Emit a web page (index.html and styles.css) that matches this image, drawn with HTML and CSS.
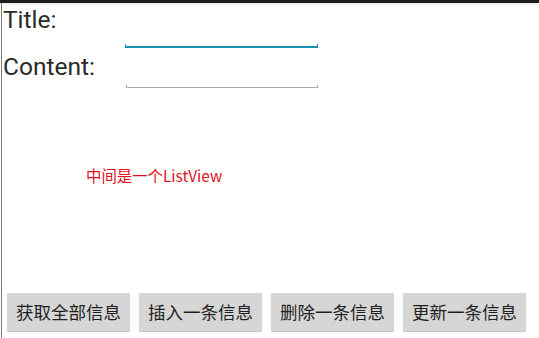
FILE: index.html
```html
<!DOCTYPE html>
<html>
<head>
<meta charset="utf-8">
<link rel="stylesheet" href="styles.css">
</head>
<body>
<div class="topbar"></div>
<div class="screen">
  <div class="row row-title">
    <span class="label">Title:</span>
    <div class="field field-active"></div>
  </div>
  <div class="row row-content">
    <span class="label">Content:</span>
    <div class="field"></div>
  </div>
  <div class="list">
    <span class="hint">中间是一个ListView</span>
  </div>
  <div class="buttons">
    <button class="btn">获取全部信息</button>
    <button class="btn">插入一条信息</button>
    <button class="btn">删除一条信息</button>
    <button class="btn">更新一条信息</button>
  </div>
</div>
</body>
</html>
```
FILE: styles.css
```css
html, body {
  margin: 0;
  padding: 0;
  background: #fff;
}
body {
  width: 539px;
  height: 338px;
  overflow: hidden;
  display: flex;
  flex-direction: column;
  font-family: Roboto, "Noto Sans CJK SC", sans-serif;
}
.topbar {
  height: 3px;
  background: #1e1e1e;
  box-shadow: 0 1px 4px rgba(0,0,0,0.12);
  flex: none;
}
.screen {
  flex: 1;
  margin-left: 1px;
  border-left: 1px solid #7a7a7a;
  display: flex;
  flex-direction: column;
  padding-left: 1px;
}
.row {
  display: flex;
  align-items: flex-start;
}
.label {
  font-size: 24.5px;
  color: #2b2b2b;
  line-height: 27px;
  width: 122px;
  flex: none;
}
.row-title {
  height: 45px;
  padding-top: 3px;
  box-sizing: border-box;
}
.row-content {
  padding-top: 5px;
  height: 38px;
  box-sizing: border-box;
}
.field {
  width: 192px;
  height: 3px;
  border: 1px solid #a8a8a8;
  border-top: none;
  align-self: flex-end;
  box-sizing: border-box;
}
.field-active {
  border-color: #1a93b5;
  border-bottom-width: 2px;
  height: 4px;
  width: 193px;
}
.row-content .field {
  margin-bottom: -2px;
  margin-left: 1px;
}
.list {
  flex: 1;
  padding-top: 80px;
  padding-left: 83px;
}
.hint {
  font-family: "Noto Sans CJK SC", sans-serif;
  font-size: 15.4px;
  color: #e0141e;
  line-height: 18px;
}
.buttons {
  display: flex;
  gap: 9px;
  padding-left: 4px;
  padding-bottom: 7px;
}
.btn {
  font-family: "Noto Sans CJK SC", sans-serif;
  font-size: 17.5px;
  color: #1f1f1f;
  background: #d6d6d6;
  border: none;
  border-radius: 1px;
  box-shadow: 0 1px 1px rgba(0,0,0,0.25);
  height: 38px;
  width: 123px;
  padding: 0;
  line-height: 38px;
}
```
